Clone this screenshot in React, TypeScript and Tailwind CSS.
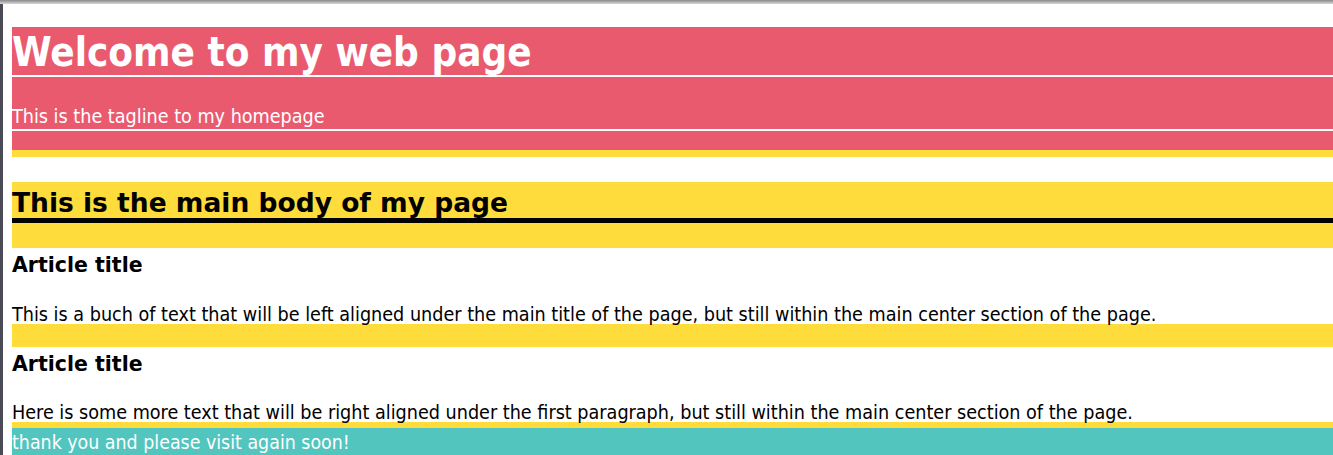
export default function App() {
  const body = "font-['DejaVu_Sans_Condensed','DejaVu_Sans',sans-serif]";
  const head = "font-['DejaVu_Sans','Verdana',sans-serif]";
  return (
    <div className="h-[455px] overflow-hidden bg-white">
      <div className="h-1 bg-gradient-to-b from-[#8a8a8a] to-[#d8d8d8]" />
      <div className="flex h-[451px]">
        <div className="w-[3px] shrink-0 bg-[#4b4b57]" />
        <div className="flex-1 pl-[9px] pt-[23px]">
          <header className="border-b-[7px] border-[#fddc3c] bg-[#ea5a6f] pb-[19px] text-white">
            <h1 className={`${body} border-b-2 border-white pt-[3px] text-[40px] font-bold leading-[45px]`}>
              Welcome to my web page
            </h1>
            <p className={`${body} flex h-[54px] items-end border-b-2 border-white text-[19.6px] leading-[24px]`}>
              This is the tagline to my homepage
            </p>
          </header>

          <section className="mt-[25px] bg-[#fddc3c] pb-[25px]">
            <h2 className={`${head} flex h-[41px] items-end border-b-[5px] border-black text-[26.5px] font-bold leading-[30px] text-black`}>
              This is the main body of my page
            </h2>
          </section>

          <article className="h-[76px] text-black">
            <h3 className={`${head} pt-[4px] text-[20.5px] font-bold leading-[26px]`}>Article title</h3>
            <p className={`${body} mt-[25px] text-[19.6px] leading-[24px]`}>
              This is a buch of text that will be left aligned under the main title of the page, but still within the main center section of the page.
            </p>
          </article>

          <div className="h-[23px] bg-[#fddc3c]" />

          <article className="h-[75px] text-black">
            <h3 className={`${head} pt-[4px] text-[20.5px] font-bold leading-[26px]`}>Article title</h3>
            <p className={`${body} mt-[24px] text-[19.6px] leading-[24px]`}>
              Here is some more text that will be right aligned under the first paragraph, but still within the main center section of the page.
            </p>
          </article>

          <div className="h-[6px] bg-[#fddc3c]" />

          <footer className={`${body} h-[40px] bg-[#52c5bf] pt-[2px] text-[19.4px] leading-[26px] text-white`}>
            thank you and please visit again soon!
          </footer>
        </div>
      </div>
    </div>
  );
}
